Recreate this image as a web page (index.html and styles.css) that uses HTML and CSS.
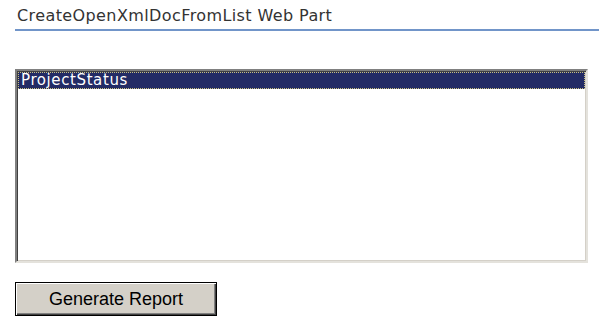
FILE: index.html
```html
<!DOCTYPE html>
<html lang="en">
<head>
    <meta charset="UTF-8">
    <meta name="viewport" content="width=device-width, initial-scale=1.0">
    <title>CreateOpenXmlDocFromList Web Part</title>
    <link rel="stylesheet" href="styles.css">
</head>
<body>
    <div class="web-part">
        <div class="part-title">CreateOpenXmlDocFromList Web Part</div>
        <div class="list-box">
            <div class="list-item selected">ProjectStatus</div>
        </div>
        <button type="button" class="report-button">Generate Report</button>
    </div>
</body>
</html>
```

FILE: styles.css
```css
/* Стили веб-части */
body {
    margin: 0;
    background-color: #fff;
    font-family: "DejaVu Sans", Verdana, sans-serif;
}
.web-part {
    padding: 6px 0 0 15px;
}
.part-title {
    font-size: 16px;
    letter-spacing: 0.4px;
    line-height: 19px;
    color: #333;
    padding: 0 0 4px 2px;
    border-bottom: 2px solid #7195c9;
    margin-right: 1px;
}
.list-box {
    margin-top: 38px;
    width: 567px;
    height: 188px;
    border-top: 2px solid #808080;
    border-left: 2px solid #808080;
    border-right: 2px solid #e4e2dc;
    border-bottom: 2px solid #e4e2dc;
    box-shadow: inset 1px 1px 0 #404040, inset -1px -1px 0 #d4d0c8;
    padding: 1px;
    background: #fff;
}
.list-item {
    font-size: 15px;
    letter-spacing: 0.6px;
    line-height: 15px;
    padding: 0 2px;
    color: #000;
}
.selected {
    background-color: #232b65;
    color: #fff;
    border: 1px dotted #c8c080;
}
.report-button {
    display: block;
    margin-top: 19px;
    width: 202px;
    height: 34px;
    background-color: #d4d0c8;
    font-family: "Liberation Sans", Arial, sans-serif;
    font-size: 18px;
    color: #000;
    border: 1px solid #000;
    box-shadow: inset 1px 1px 0 #fff, inset -1px -1px 0 #404040, inset -2px -2px 0 #808080;
    padding: 0;
}
```
